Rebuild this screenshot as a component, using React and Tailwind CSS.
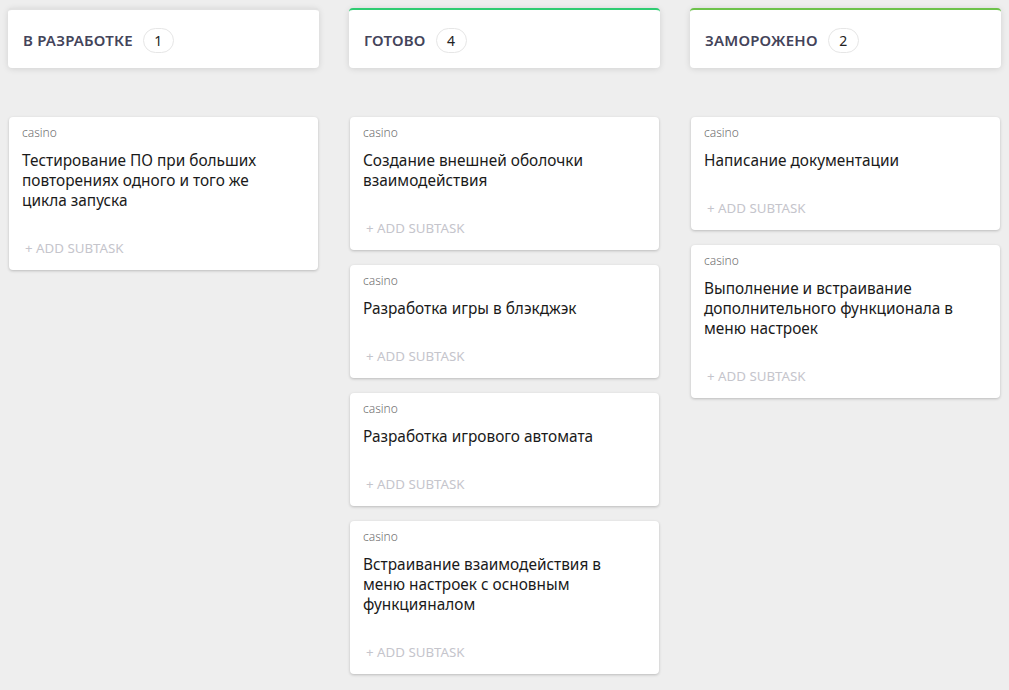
import React from "react";

const columns = [
  {
    title: "В РАЗРАБОТКЕ",
    count: 1,
    border: "border-t-[#e2e2e2]",
    cards: ["Тестирование ПО при больших повторениях одного и того же цикла запуска"],
  },
  {
    title: "ГОТОВО",
    count: 4,
    border: "border-t-[#2ecc71]",
    cards: [
      "Создание внешней оболочки взаимодействия",
      "Разработка игры в блэкджэк",
      "Разработка игрового автомата",
      "Встраивание взаимодействия в меню настроек с основным функцияналом",
    ],
  },
  {
    title: "ЗАМОРОЖЕНО",
    count: 2,
    border: "border-t-[#6cc24a]",
    cards: [
      "Написание документации",
      "Выполнение и встраивание дополнительного функционала в меню настроек",
    ],
  },
];

function Card({ text }) {
  return (
    <div className="mx-px bg-white rounded-[4px] shadow-[0_1px_3px_rgba(0,0,0,0.22)] pl-[13px] pr-4 pt-2 pb-3 flex flex-col">
      <div className="text-[12px] leading-4 text-[#707070] font-light">casino</div>
      <div className="mt-[10px] text-[15.4px] leading-5 text-[#1a1a1a] pr-6">{text}</div>
      <div className="mt-[27px] pl-[3px] text-[13.3px] leading-5 text-[#c5c5cc]">+ ADD SUBTASK</div>
    </div>
  );
}

export default function App() {
  return (
    <div
      className="min-h-[690px] bg-[#eeeeee] px-2 pt-2"
      style={{ fontFamily: '"Segoe UI", "Noto Sans", "Open Sans", sans-serif' }}
    >
      <div className="grid grid-cols-3 gap-[30px]">
        {columns.map((col) => (
          <div key={col.title} className="flex flex-col">
            <div
              className={`h-[60px] bg-white rounded-[4px] border-t-2 ${col.border} shadow-[0_1px_6px_rgba(0,0,0,0.12)] flex items-center pl-[15px] pt-[2px]`}
            >
              <span className="text-[15px] font-semibold text-[#44445a] tracking-[0.2px]">{col.title}</span>
              <span className="ml-[10px] h-[25px] w-[31px] rounded-full border border-[#e6e6e6] flex items-center justify-center text-[14px] text-[#222]">
                {col.count}
              </span>
            </div>
            <div className="mt-[49px] flex flex-col gap-[15px]">
              {col.cards.map((c) => (
                <Card key={c} text={c} />
              ))}
            </div>
          </div>
        ))}
      </div>
    </div>
  );
}
